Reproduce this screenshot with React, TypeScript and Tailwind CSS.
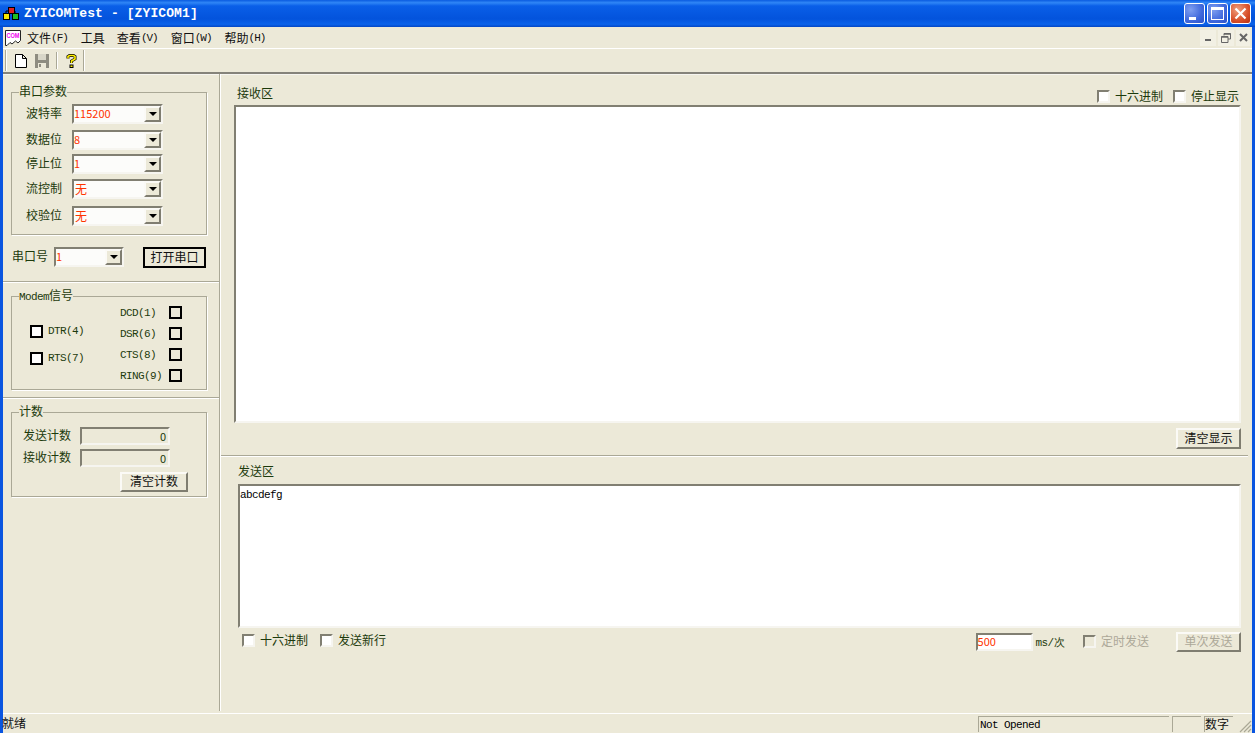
const sunken = 'border-2 border-t-[#817f72] border-l-[#817f72] border-r-[#f6f5f0] border-b-[#f6f5f0]';
const raised = 'border-2 border-t-[#fbfaf6] border-l-[#fbfaf6] border-r-[#7f7d70] border-b-[#7f7d70] bg-[#ece9d8]';
const mono = "font-['Liberation_Mono',monospace] text-[11px] tracking-[-0.6px]";

function Combo({ value, big, className }: { value: string; big?: boolean; className: string }) {
  return (
    <div className={`flex h-[20px] items-stretch bg-[#fcfcfa] ${sunken} ${className}`}>
      <span className={`flex-1 text-[#ff3300] ${big ? 'pl-[1px] text-[12px] leading-[15px]' : 'text-[11px] leading-[14px]'}`}>{value}</span>
      <span className={`flex w-[17px] items-center justify-center ${raised}`}>
        <span className="h-0 w-0 border-x-[4px] border-t-[4px] border-x-transparent border-t-black" />
      </span>
    </div>
  );
}

function ComboRow({ label, value, big, className = '' }: { label: string; value: string; big?: boolean; className?: string }) {
  return (
    <div className={`flex items-center ${className}`}>
      <span className="w-[60px] pb-[2px] pl-[14px] text-[#1c3a0c]">{label}</span>
      <Combo value={value} big={big} className="w-[91px]" />
    </div>
  );
}

function Group({ title, className, children }: { title: React.ReactNode; className: string; children: React.ReactNode }) {
  return (
    <div className={`relative mx-[8px] w-[196px] border border-[#aaa896] shadow-[1px_1px_0_#fff] ${className}`}>
      <span className="absolute -top-[9px] left-[7px] bg-[#ece9d8] leading-[14px] text-[#1c3a0c]">{title}</span>
      {children}
    </div>
  );
}

function Check({ label, disabled, className = '' }: { label: string; disabled?: boolean; className?: string }) {
  return (
    <label className={`flex items-center gap-[5px] ${disabled ? 'text-[#aca899]' : 'text-[#1c3a0c]'} ${className}`}>
      <span className={`h-[13px] w-[13px] ${disabled ? 'bg-[#ece9d8]' : 'bg-white'} ${sunken}`} />
      {label}
    </label>
  );
}

function Led({ label, white }: { label: string; white?: boolean }) {
  return <span className={`block h-[13px] w-[13px] border-2 border-black ${white ? 'bg-white' : ''}`} aria-label={label} />;
}

function SignalRight({ label }: { label: string }) {
  return (
    <div className="flex h-[21px] items-center">
      <span className={`mt-[1px] w-[49px] text-[#1c3a0c] ${mono}`}>{label}</span>
      <Led label={label} />
    </div>
  );
}

function SignalLeft({ label, className = '' }: { label: string; className?: string }) {
  return (
    <div className={`flex items-center gap-[5px] ${className}`}>
      <Led label={label} white />
      <span className={`leading-[13px] text-[#1c3a0c] ${mono}`}>{label}</span>
    </div>
  );
}

function Counter({ label, className = '' }: { label: string; className?: string }) {
  return (
    <div className={`flex items-center ${className}`}>
      <span className="w-[68px] pb-[2px] pl-[11px] leading-[14px] text-[#1c3a0c]">{label}</span>
      <div className={`h-[18px] w-[90px] pr-[2px] text-right text-[11px] leading-[14px] text-[#1c3a0c] ${sunken}`}>0</div>
    </div>
  );
}

function Menu({ label, hot, className = '' }: { label: string; hot?: string; className?: string }) {
  return (
    <span className={`flex items-center text-[12px] text-[#111] ${className}`}>
      {label}
      {hot && <span className="mt-[2px] font-['Liberation_Mono',monospace] text-[11px] tracking-[-1px]">({hot})</span>}
    </span>
  );
}

function TitleButton({ kind }: { kind: 'min' | 'max' | 'close' }) {
  const face =
    kind === 'close'
      ? 'bg-[radial-gradient(circle_at_35%_30%,#f0a080,#d8502a_60%,#b83010)]'
      : 'bg-[radial-gradient(circle_at_30%_30%,#7f9ff0,#3f68dc_60%,#2a50c8)]';
  return (
    <span className={`flex h-[21px] w-[21px] items-center justify-center rounded-[3px] border border-white ${face}`}>
      {kind === 'min' && <span className="mt-[9px] mr-[5px] h-[3px] w-[7px] bg-white" />}
      {kind === 'max' && <span className="h-[13px] w-[13px] border border-t-[3px] border-white" />}
      {kind === 'close' && (
        <svg width="13" height="13" viewBox="0 0 13 13">
          <path d="M1.5 1.5 11.5 11.5M11.5 1.5 1.5 11.5" stroke="#fff" strokeWidth="2.2" />
        </svg>
      )}
    </span>
  );
}

function AppIcon() {
  return (
    <svg width="16" height="14" viewBox="0 0 16 14" className="shrink-0">
      <rect x="5.5" y="0.5" width="6" height="6" fill="#e02020" stroke="#000" />
      <rect x="0.5" y="6.5" width="6" height="6" fill="#f8e800" stroke="#000" />
      <rect x="9.5" y="6.5" width="6" height="6" fill="#20c020" stroke="#000" />
      <path d="M3 6V4H6M12 6V4H11" fill="none" stroke="#000" />
    </svg>
  );
}

function ComIcon() {
  return (
    <svg width="16" height="16" viewBox="0 0 16 16" className="shrink-0">
      <path d="M.5.5H15.5V10.5L13 13 10.5 11 7 14 5 12.5 2 15.5H.5Z" fill="#fff" stroke="#222" />
      <text x="1.500" y="8" fontSize="6.500" fontWeight="700" fill="#f000f0" fontFamily="Liberation Sans" textLength="13" lengthAdjust="spacingAndGlyphs">COM</text>
    </svg>
  );
}

function NewIcon() {
  return (
    <svg width="12" height="14" viewBox="0 0 12 14">
      <path d="M.5.5H7.5L11.5 4.5V13.5H.5ZM7.5.5V4.5H11.5" fill="#fff" stroke="#000" />
    </svg>
  );
}

function SaveIcon() {
  return (
    <svg width="14" height="14" viewBox="0 0 14 14">
      <rect width="14" height="14" fill="#8e8c80" />
      <rect x="3" y="0" width="8" height="6" fill="#d8d6c8" />
      <rect x="3" y="9" width="8" height="5" fill="#ece9d8" />
      <rect x="4" y="10" width="2" height="3" fill="#8e8c80" />
    </svg>
  );
}

function HelpIcon() {
  return (
    <svg width="11" height="14" viewBox="0 0 11 14">
      <path d="M2 4.500V2.500L3.500 1.500H7.500L9 2.500V5L5.500 7V9" fill="none" stroke="#000" strokeWidth="3" />
      <path d="M2 4.500V2.500L3.500 1.500H7.500L9 2.500V5L5.500 7V9" fill="none" stroke="#ffee00" strokeWidth="1.600" />
      <rect x="3.500" y="10.500" width="4" height="3.500" fill="#000" />
      <rect x="4.500" y="11.500" width="2" height="1.500" fill="#ffee00" />
    </svg>
  );
}

function Divider() {
  return <div className="h-[2px] border-t border-[#aaa896] bg-white" />;
}

export default function App() {
  return (
    <div className="flex h-[733px] w-[1255px] flex-col overflow-hidden bg-[#ece9d8] font-['Noto_Sans_CJK_SC','Liberation_Sans',sans-serif] text-[12px]">
      <header className="flex h-[27px] shrink-0 items-center bg-[linear-gradient(180deg,#0a5be0_0%,#2f86f6_10%,#0a5fe8_22%,#0353dc_70%,#0a62ea_90%,#0346c4_100%)] pl-[3px] pr-[3px]">
        <AppIcon />
        <span className="ml-[5px] flex-1 font-['Liberation_Mono',monospace] text-[13px] font-bold tracking-[0.1px] text-white">ZYICOMTest - [ZYICOM1]</span>
        <div className="flex gap-[2px] pr-[1px]">
          <TitleButton kind="min" />
          <TitleButton kind="max" />
          <TitleButton kind="close" />
        </div>
      </header>

      <div className="flex min-h-0 flex-1 flex-col border-x-[3px] border-x-[#0a55e0]">
        <nav className="flex h-[21px] shrink-0 items-center pl-[2px]">
          <ComIcon />
          <div className="ml-[6px] flex flex-1 gap-[13px]">
            <Menu label="文件" hot="F" />
            <Menu label="工具" className="-mr-[1px]" />
            <Menu label="查看" hot="V" />
            <Menu label="窗口" hot="W" />
            <Menu label="帮助" hot="H" />
          </div>
          <div className="flex gap-[2px] pr-[2px]">
            <span className="flex h-[16px] w-[16px] items-center justify-center bg-[#f2f0e4]">
              <span className="mt-[5px] h-[2px] w-[6px] bg-[#666]" />
            </span>
            <span className="flex h-[16px] w-[16px] items-center justify-center bg-[#f2f0e4]">
              <svg width="10" height="10" viewBox="0 0 10 10">
                <path d="M3 2.5V.5H9.5V6H7M.5 3.5H7V9.5H.5Z" fill="none" stroke="#666" />
                <path d="M3 1H9.500M.5 4H7" stroke="#666" strokeWidth="1.500" />
              </svg>
            </span>
            <span className="flex h-[16px] w-[14px] items-center justify-center bg-[#f2f0e4]">
              <svg width="9" height="9" viewBox="0 0 9 9">
                <path d="M1 1 8 8M8 1 1 8" stroke="#666" strokeWidth="2" />
              </svg>
            </span>
          </div>
        </nav>

        <div className="flex h-[26px] shrink-0 items-center border-t border-t-white border-b-2 border-b-[#85837a]">
          <span className="ml-[2px] h-[21px] w-[2px] border-l border-[#aaa896] bg-white" />
          <span className="ml-[7px] flex w-[14px] justify-center"><NewIcon /></span>
          <span className="ml-[7px]"><SaveIcon /></span>
          <span className="ml-[7px] h-[17px] w-[2px] border-l border-[#aaa896] bg-white" />
          <span className="ml-[8px]"><HelpIcon /></span>
          <span className="ml-[6px] h-[21px] w-[2px] border-l border-[#aaa896] bg-white" />
        </div>

        <main className="flex min-h-0 flex-1">
          <aside className="flex h-[637px] w-[216px] shrink-0 flex-col border-t border-t-[#f6f5f0] pt-[17px]">
            <Group title="串口参数" className="h-[143px] pt-[11px]">
              <ComboRow label="波特率" value="115200" />
              <ComboRow label="数据位" value="8" className="mt-[6px]" />
              <ComboRow label="停止位" value="1" className="mt-[4px]" />
              <ComboRow label="流控制" value="无" big className="mt-[5px]" />
              <ComboRow label="校验位" value="无" big className="mt-[7px]" />
            </Group>

            <div className="mt-[12px] flex items-start pl-[9px]">
              <span className="mt-[2px] w-[42px] leading-[14px] text-[#1c3a0c]">串口号</span>
              <Combo value="1" className="w-[70px]" />
              <button className="ml-[19px] h-[21px] w-[63px] border-2 border-black bg-[#ece9d8] pb-[2px] text-[12px] leading-[14px] text-[#111]">打开串口</button>
            </div>

            <div className="mt-[13px]"><Divider /></div>

            <Group
              title={<><span className={mono}>Modem</span>信号</>}
              className="mt-[13px] h-[94px]"
            >
              <div className="flex h-full">
                <div className="w-[108px] pl-[18px] pt-[28px]">
                  <SignalLeft label="DTR(4)" />
                  <SignalLeft label="RTS(7)" className="mt-[14px]" />
                </div>
                <div className="pt-[5px]">
                  <SignalRight label="DCD(1)" />
                  <SignalRight label="DSR(6)" />
                  <SignalRight label="CTS(8)" />
                  <SignalRight label="RING(9)" />
                </div>
              </div>
            </Group>

            <div className="mt-[7px]"><Divider /></div>

            <Group title="计数" className="mt-[13px] h-[85px] pt-[14px]">
              <Counter label="发送计数" />
              <Counter label="接收计数" className="mt-[4px]" />
              <div className="mt-[5px] flex justify-end pr-[18px]">
                <button className={`h-[20px] w-[68px] pb-[2px] text-[12px] leading-[14px] text-[#111] ${raised}`}>清空计数</button>
              </div>
            </Group>
          </aside>

          <div className="h-[637px] w-[2px] shrink-0 border-l border-[#aaa896] bg-white" />

          <section className="flex min-w-0 flex-1 flex-col border-t border-t-[#f6f5f0]">
            <div className="flex h-[30px] items-end justify-between pl-[16px] pr-[13px]">
              <span className="pb-[5px] leading-[14px] text-[#1c3a0c]">接收区</span>
              <div className="flex gap-[10px]">
                <Check label="十六进制" />
                <Check label="停止显示" />
              </div>
            </div>
            <div className={`ml-[13px] mr-[11px] h-[318px] bg-white ${sunken}`} />
            <div className="mr-[11px] mt-[5px] flex justify-end">
              <button className={`h-[21px] w-[65px] pb-[2px] text-[12px] leading-[14px] text-[#111] ${raised}`}>清空显示</button>
            </div>
            <div className="mt-[6px] mr-[4px]"><Divider /></div>
            <span className="ml-[17px] mt-[7px] leading-[14px] text-[#1c3a0c]">发送区</span>
            <div className={`ml-[17px] mr-[11px] mt-[6px] h-[144px] bg-white pt-[1px] text-black ${sunken} ${mono}`}>abcdefg</div>
            <div className="mr-[11px] mt-[5px] flex items-start pl-[21px]">
              <Check label="十六进制" className="h-[14px]" />
              <Check label="发送新行" className="ml-[12px] h-[14px]" />
              <div className={`ml-auto h-[18px] w-[57px] bg-white text-[11px] leading-[13px] text-[#ff3300] ${sunken}`}>500</div>
              <span className={`ml-[3px] mt-[2px] text-[#1c3a0c] ${mono}`}>ms/次</span>
              <Check label="定时发送" disabled className="ml-[19px] mt-[1px] h-[14px]" />
              <button disabled className={`-mt-[1px] ml-[27px] h-[20px] w-[65px] pb-[2px] text-[12px] leading-[14px] text-[#aca899] ${raised}`}>单次发送</button>
            </div>
          </section>
        </main>

        <footer className="flex h-[20px] shrink-0 items-center border-t border-t-white">
          <span className="-ml-[1px] flex-1 pb-[2px] text-[#111]">就绪</span>
          <span className={`h-[16px] w-[191px] border-t border-l border-[#aaa896] pl-[1px] leading-[16px] text-black ${mono}`}>Not Opened</span>
          <span className="ml-[3px] h-[16px] w-[29px] border-t border-l border-[#aaa896]" />
          <span className="ml-[3px] h-[16px] w-[29px] border-t border-l border-[#aaa896] leading-[13px] text-[#111]">数字</span>
          <svg width="19" height="19" viewBox="0 0 19 19" className="self-end">
            <path d="M18 7 7 18M18 11 11 18M18 15 15 18" stroke="#aaa896" strokeWidth="1.200" />
          </svg>
        </footer>
      </div>
    </div>
  );
}
